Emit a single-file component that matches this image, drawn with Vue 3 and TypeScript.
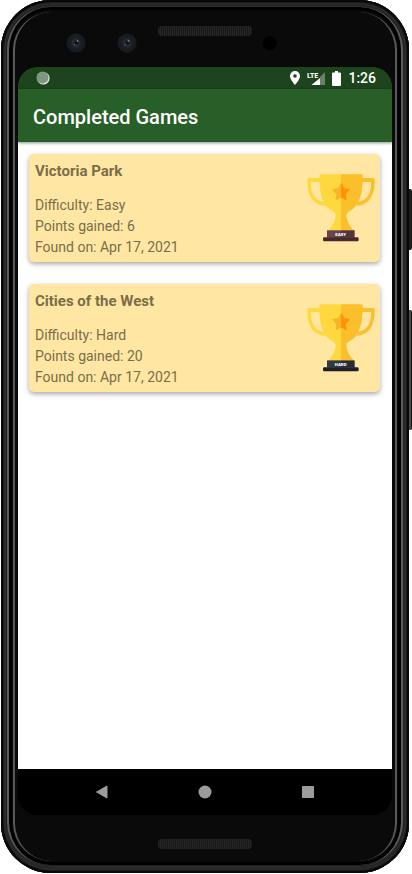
<script setup lang="ts">
interface Game {
  id: number
  title: string
  difficulty: 'Easy' | 'Hard'
  points: number
  foundOn: string
}

const games: Game[] = [
  { id: 1, title: 'Victoria Park', difficulty: 'Easy', points: 6, foundOn: 'Apr 17, 2021' },
  { id: 2, title: 'Cities of the West', difficulty: 'Hard', points: 20, foundOn: 'Apr 17, 2021' },
]
</script>

<template>
  <div class="device">
    <span class="side-key power"></span>
    <span class="side-key volume"></span>
    <div class="shell">
      <div class="bezel top">
        <div class="cameras">
          <svg v-for="n in 2" :key="n" class="lens" viewBox="0 0 20 20" aria-hidden="true">
            <circle cx="10" cy="10" r="9.6" fill="#151c22" />
            <circle cx="10" cy="10" r="6.4" fill="#1c1f25" />
            <circle cx="10" cy="10" r="4.4" fill="#2a2c33" />
            <circle cx="10.5" cy="9.5" r="2.2" fill="#11131a" />
            <circle cx="11.5" cy="8" r="1" fill="#777983" />
            <circle cx="8.5" cy="11.5" r=".8" fill="#53556a" />
          </svg>
        </div>
        <div class="speaker"></div>
        <div class="sensor"></div>
      </div>

      <div class="screen">
        <div class="status">
          <svg class="spinner" viewBox="0 0 14 14" aria-hidden="true">
            <circle cx="7.3" cy="7.3" r="6.3" fill="#dfe6df" />
            <circle cx="6.5" cy="6.5" r="6" fill="#7f977f" />
          </svg>
          <div class="indicators">
            <svg class="pin" viewBox="0 0 10 14" aria-hidden="true">
              <path fill="#fff" fill-rule="evenodd" d="M5 0a5 5 0 0 0-5 5c0 3.5 5 9 5 9s5-5.5 5-9a5 5 0 0 0-5-5zM5 3.2a1.8 1.8 0 1 1 0 3.6 1.8 1.8 0 0 1 0-3.6z" />
            </svg>
            <svg class="signal" viewBox="0 0 18 15" aria-hidden="true">
              <path fill="#688168" d="M18 1v13h-5V6z" />
              <path fill="#fff" d="M13 7v7H4.5z" />
              <text x="0" y="7" class="lte">LTE</text>
            </svg>
            <svg class="battery" viewBox="0 0 9 15" aria-hidden="true">
              <path fill="#fff" d="M3 0h3v1.5h2q1 0 1 1V14q0 1-1 1H1q-1 0-1-1V2.5q0-1 1-1h2z" />
            </svg>
            <span class="time">1:26</span>
          </div>
        </div>

        <header class="app-bar">
          <h1>Completed Games</h1>
        </header>

        <main class="list">
          <article v-for="game in games" :key="game.id" class="card">
            <div class="details">
              <h2>{{ game.title }}</h2>
              <p>Difficulty: {{ game.difficulty }}</p>
              <p>Points gained: {{ game.points }}</p>
              <p>Found on: {{ game.foundOn }}</p>
            </div>
            <svg class="trophy" :class="game.difficulty.toLowerCase()" viewBox="51 86 204 204" role="img">
              <path fill="#ffd83f" d="M92 98H57q-5 0-5 5c-1 44 14 75 54 78l-5-12c-26-4-39-23-38-59h30z" />
              <path fill="#fbbf2b" d="M214 98h35q5 0 5 5c1 44-14 75-54 78l5-12c26-4 39-23 38-59h-30z" />
              <path fill="#ffd83f" d="M153 87H92q-4 0-4 4c0 56 9 91 40 107 9 5 10 12 7 23-3 13-11 24-20 34h38z" />
              <path fill="#fbbf2b" d="M153 87h61q4 0 4 4c0 56-9 91-40 107-9 5-10 12-7 23 3 13 11 24 20 34h-38z" />
              <path fill="#fbb32b" stroke="#fbb32b" stroke-width="4" stroke-linejoin="round" d="M153 116l-7 14-17 3 12 13-2 16 14-7z" />
              <path fill="#ff9205" stroke="#ff9205" stroke-width="4" stroke-linejoin="round" d="M155 116l6 14 16 3-12 13 3 16-13-7z" />
              <path class="base" d="M111 255h42v22h-42z" />
              <path class="base shade" d="M153 255h41v22h-41z" />
              <path class="foot" d="M103 276h99q4 0 4 4v4q0 4-4 4h-99q-4 0-4-4v-4q0-4 4-4z" />
              <text x="152" y="271" class="plate">{{ game.difficulty.toUpperCase() }}</text>
            </svg>
          </article>
        </main>

        <nav class="nav">
          <button type="button" aria-label="Back">
            <svg viewBox="0 0 14 14"><path d="M12 1v12L1.5 7z" fill="#9c9c9c" stroke="#9c9c9c" stroke-linejoin="round" /></svg>
          </button>
          <button type="button" aria-label="Home">
            <svg viewBox="0 0 14 14"><circle cx="7" cy="7" r="6.5" fill="#9c9c9c" /></svg>
          </button>
          <button type="button" aria-label="Recent apps">
            <svg viewBox="0 0 14 14"><rect x="1" y="1" width="12" height="12" rx="1" fill="#9c9c9c" /></svg>
          </button>
        </nav>
      </div>

      <div class="bezel bottom">
        <div class="speaker"></div>
      </div>
    </div>
  </div>
</template>

<style>
body {
  background: #fff;
}
</style>

<style scoped>
* {
  box-sizing: border-box;
}
.device {
  position: relative;
  display: flex;
  min-height: 100vh;
  padding: 0 3px 1px 1px;
  font-family: Roboto, "Noto Sans", sans-serif;
}
.side-key {
  position: absolute;
  right: 0;
  width: 6px;
  border-radius: 2px;
  background: #1c1c1c;
}
.power {
  top: 189px;
  height: 61px;
}
.volume {
  top: 310px;
  height: 120px;
  border-right: 1px solid #111;
  background: #4a4a4a;
}
.shell {
  position: relative;
  flex: 1;
  min-width: 0;
  display: flex;
  flex-direction: column;
  padding: 0 17px;
  border-radius: 50px;
  background: #0a0a0a;
  box-shadow:
    inset 0 0 0 2px #080808,
    inset 0 0 0 3px #1a1a1a,
    inset 0 0 0 5px #2a2a2a,
    inset 0 0 0 6px #222,
    inset 0 0 0 7px #303030,
    inset 0 0 0 8px #1c1c1c;
}
.shell::before {
  content: "";
  position: absolute;
  inset: 7px 6px 8px;
  border: solid #5c5c5c;
  border-width: 0 2px;
  border-radius: 43px;
  box-shadow: inset 0 0 0 3px #000;
  pointer-events: none;
}
.shell::after {
  content: "";
  position: absolute;
  inset: 12px;
  border: solid #5a585f;
  border-width: 0 2px;
  border-radius: 38px;
  pointer-events: none;
}
.bezel {
  display: grid;
  grid-template-columns: 1fr 94px 1fr;
}
.top {
  height: 67px;
  padding-top: 26px;
}
.bottom {
  height: 58px;
  padding-top: 24px;
}
.speaker {
  grid-column: 2;
  height: 10px;
  border-radius: 4px;
  background: repeating-linear-gradient(90deg, #262626 0 1px, #191919 1px 2px);
}
.cameras {
  display: flex;
  justify-content: flex-end;
  gap: 31px;
  padding: 7px 21px 0 0;
}
.lens {
  width: 20px;
  height: 20px;
}
.sensor {
  width: 14px;
  height: 14px;
  margin: 10px 0 0 11px;
  border-radius: 50%;
  background: #000;
}
.screen {
  flex: 1;
  display: flex;
  flex-direction: column;
  overflow: hidden;
  border-radius: 20px;
  background: linear-gradient(#1e441d 0 22px, #fff 22px calc(100% - 46px), #000 calc(100% - 46px));
}
.status {
  display: flex;
  align-items: center;
  justify-content: space-between;
  height: 22px;
  padding: 0 16px 0 18px;
  background: #1e441d;
}
.spinner {
  width: 14px;
  height: 14px;
}
.indicators {
  display: flex;
  align-items: center;
  gap: 7px;
}
.pin {
  width: 10px;
  height: 14px;
}
.signal {
  width: 18px;
  height: 15px;
}
.lte {
  font: 700 8px "Roboto Condensed", "Liberation Sans Narrow", Roboto, sans-serif;
  fill: #fff;
}
.battery {
  width: 9px;
  height: 15px;
}
.time {
  color: #fff;
  font-size: 14px;
  font-weight: 500;
  line-height: 22px;
}
.app-bar {
  z-index: 1;
  padding: 16px 15px 12px;
  background: #285f28;
  box-shadow: 0 1px 3px rgba(0, 0, 0, 0.45);
}
h1 {
  margin: 0;
  color: #fff;
  font-size: 20px;
  font-weight: 500;
  line-height: 25px;
}
.list {
  flex: 1;
  display: flex;
  flex-direction: column;
  gap: 22px;
  padding: 12px 12px 12px 11px;
}
.card {
  display: flex;
  justify-content: space-between;
  padding: 7px 5px 4px 6px;
  border-radius: 5px;
  background: #ffe7a3;
  box-shadow: 0 2px 5px rgba(0, 0, 0, 0.35);
  color: #7a6d4a;
}
h2 {
  margin: 0 0 13px;
  font-size: 15px;
  font-weight: 700;
  line-height: 21px;
}
p {
  margin: 0;
  font-size: 14px;
  line-height: 21px;
}
.trophy {
  width: 68px;
  height: 68px;
  margin-top: 13px;
}
.base {
  fill: #68444a;
}
.shade {
  fill: #52343c;
}
.foot {
  fill: #46282e;
}
.hard .base {
  fill: #343842;
}
.hard .shade {
  fill: #282b34;
}
.hard .foot {
  fill: #1d1e28;
}
.plate {
  font: 900 13px Roboto, sans-serif;
  text-anchor: middle;
  fill: #fff;
}
.nav {
  display: flex;
  justify-content: center;
  gap: 79px;
  padding: 11px 0;
  background: #000;
}
.nav button {
  display: grid;
  place-items: center;
  width: 24px;
  height: 24px;
  padding: 0;
  border: 0;
  background: none;
}
.nav svg {
  width: 14px;
  height: 14px;
}
</style>
